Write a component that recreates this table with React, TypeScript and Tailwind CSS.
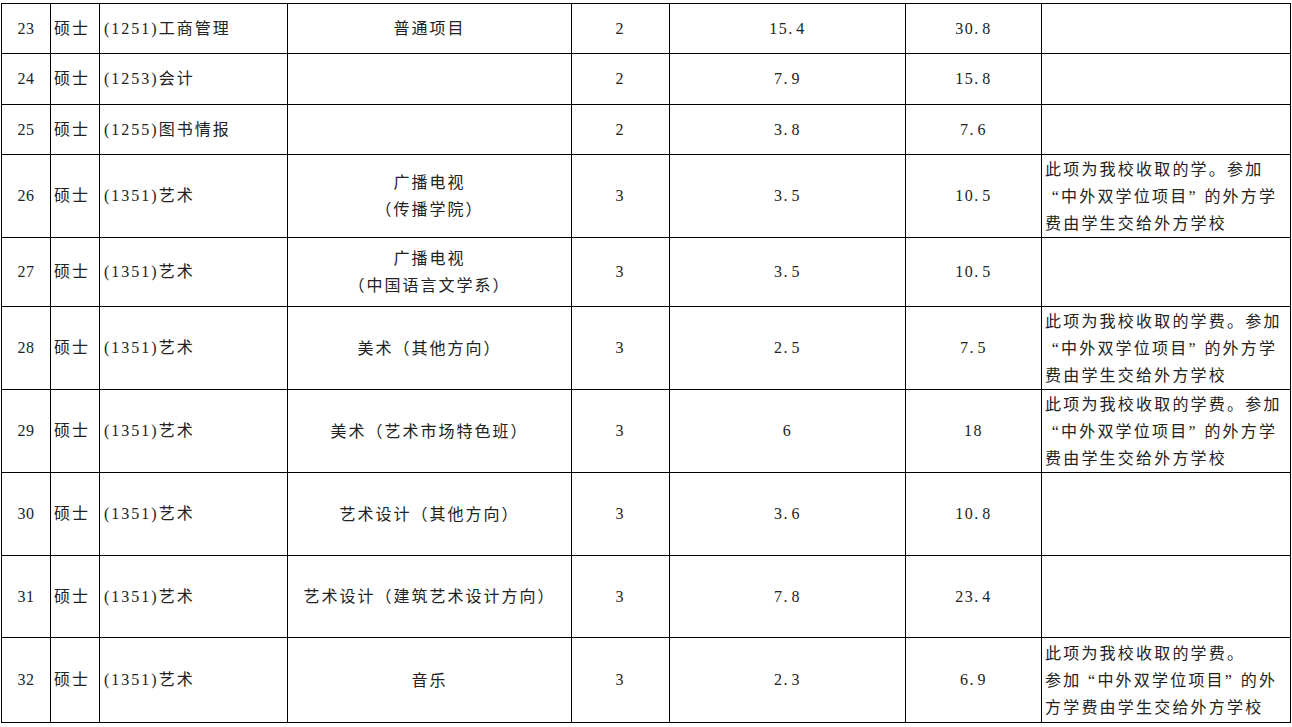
import React from 'react';

type Row = {
  no: number;
  level: string;
  major: string;
  dir: string[];
  years: string;
  fee: string;
  total: string;
  note: string[];
  h: string;
};

const NOTE_A = ['此项为我校收取的学费。参加', '“中外双学位项目”的外方学', '费由学生交给外方学校'];

const rows: Row[] = [
  { no: 23, level: '硕士', major: '(1251)工商管理', dir: ['普通项目'], years: '2', fee: '15.4', total: '30.8', note: [], h: 'h-[50px]' },
  { no: 24, level: '硕士', major: '(1253)会计', dir: [], years: '2', fee: '7.9', total: '15.8', note: [], h: 'h-[51px]' },
  { no: 25, level: '硕士', major: '(1255)图书情报', dir: [], years: '2', fee: '3.8', total: '7.6', note: [], h: 'h-[50px]' },
  {
    no: 26, level: '硕士', major: '(1351)艺术', dir: ['广播电视', '（传播学院）'], years: '3', fee: '3.5', total: '10.5',
    note: ['此项为我校收取的学。参加', '“中外双学位项目”的外方学', '费由学生交给外方学校'], h: 'h-[83px]',
  },
  { no: 27, level: '硕士', major: '(1351)艺术', dir: ['广播电视', '（中国语言文学系）'], years: '3', fee: '3.5', total: '10.5', note: [], h: 'h-[69px]' },
  { no: 28, level: '硕士', major: '(1351)艺术', dir: ['美术（其他方向）'], years: '3', fee: '2.5', total: '7.5', note: NOTE_A, h: 'h-[83px]' },
  { no: 29, level: '硕士', major: '(1351)艺术', dir: ['美术（艺术市场特色班）'], years: '3', fee: '6', total: '18', note: NOTE_A, h: 'h-[83px]' },
  { no: 30, level: '硕士', major: '(1351)艺术', dir: ['艺术设计（其他方向）'], years: '3', fee: '3.6', total: '10.8', note: [], h: 'h-[83px]' },
  { no: 31, level: '硕士', major: '(1351)艺术', dir: ['艺术设计（建筑艺术设计方向）'], years: '3', fee: '7.8', total: '23.4', note: [], h: 'h-[82px]' },
  {
    no: 32, level: '硕士', major: '(1351)艺术', dir: ['音乐'], years: '3', fee: '2.3', total: '6.9',
    note: ['此项为我校收取的学费。', '参加“中外双学位项目”的外', '方学费由学生交给外方学校'], h: 'h-[85px]',
  },
];

// numbers like 15.4: the period takes a full half-width cell, as in the original
function Num({ v }: { v: string }) {
  const parts = v.split('.');
  if (parts.length === 1) return <span>{v}</span>;
  return (
    <span>
      {parts[0]}
      <span className="inline-block w-[8px] text-left">.</span>
      {parts[1]}
    </span>
  );
}

// curly quotes are full width in the source font
function Note({ text }: { text: string }) {
  const out: React.ReactNode[] = [];
  let buf = '';
  Array.from(text).forEach((ch, i) => {
    if (ch === '“' || ch === '”') {
      if (buf) out.push(buf);
      buf = '';
      out.push(
        <span key={i} className={`inline-block w-[16px] ${ch === '“' ? 'text-right' : 'text-left'}`}>
          {ch}
        </span>
      );
    } else {
      buf += ch;
    }
  });
  if (buf) out.push(buf);
  return <div>{out}</div>;
}

const cell = 'border border-black align-middle p-0';

export default function App() {
  return (
    <div
      className="bg-white min-h-screen pt-[3px] pl-[1px] text-[16px] text-[#222] tracking-[2px]"
      style={{ fontFamily: '"Liberation Serif", "Noto Sans CJK SC", serif' }}
    >
      <table className="border-collapse w-[1289px] table-fixed">
        <colgroup>
          <col className="w-[49px]" />
          <col className="w-[49px]" />
          <col className="w-[188px]" />
          <col className="w-[284px]" />
          <col className="w-[98px]" />
          <col className="w-[236px]" />
          <col className="w-[136px]" />
          <col className="w-[249px]" />
        </colgroup>
        <tbody>
          {rows.map(r => (
            <tr key={r.no} className={r.h}>
              <td className={`${cell} text-center tracking-[0.5px]`}>{r.no}</td>
              <td className={`${cell} pl-[3px]`}>{r.level}</td>
              <td className={`${cell} pl-[4px]`}>{r.major}</td>
              <td className={`${cell} text-center leading-[27px]`}>
                {r.dir.map((d, i) => (
                  <div key={i}>{d}</div>
                ))}
              </td>
              <td className={`${cell} text-center`}>{r.years}</td>
              <td className={`${cell} text-center tracking-[1.5px]`}>
                <Num v={r.fee} />
              </td>
              <td className={`${cell} text-center tracking-[1.5px]`}>
                <Num v={r.total} />
              </td>
              <td className={`${cell} pl-[3px] leading-[27px] tracking-[2.2px] whitespace-nowrap`}>
                {r.note.map((n, i) => (
                  <Note key={i} text={n} />
                ))}
              </td>
            </tr>
          ))}
        </tbody>
      </table>
    </div>
  );
}
